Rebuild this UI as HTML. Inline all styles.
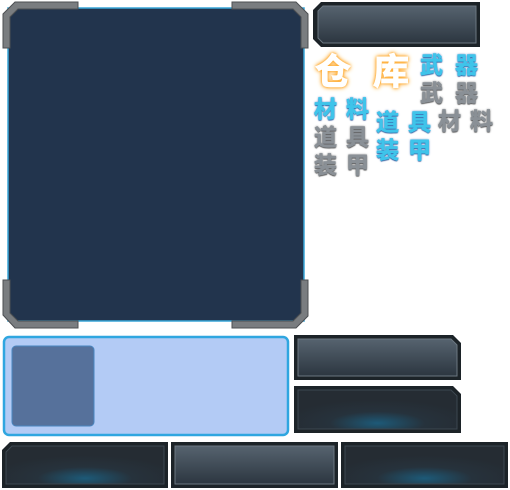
<!DOCTYPE html>
<html><head><meta charset="utf-8"><style>
body{margin:0;width:510px;height:490px;background:#fff;position:relative;overflow:hidden;font-family:"Liberation Sans","Noto Sans CJK SC",sans-serif}
.t{position:absolute;font-weight:bold;line-height:1;white-space:nowrap}
.c{color:#3fc4ea;-webkit-text-stroke:0.6px #3fc4ea;text-shadow:0 0 2px #2a5fb0,0 1px 1px #244a8a}
.g{color:#8a9096;-webkit-text-stroke:0.6px #8a9096;text-shadow:0 0 2px #555,0 1px 1px #444}
.o{color:#fff;-webkit-text-stroke:1px #fff;text-shadow:0 0 3px #ffb33a,0 0 5px #ffa020,0 0 2px #ff9a10,0 0 6px #ffc060}
</style></head><body>
<svg width="510" height="490" style="position:absolute;left:0;top:0">
<defs>
<linearGradient id="bt" x1="0" y1="0" x2="0" y2="1"><stop offset="0" stop-color="#56636f"/><stop offset="1" stop-color="#2c3640"/></linearGradient>
<radialGradient id="bd" cx="0.5" cy="0.85" r="0.6"><stop offset="0" stop-color="#1d5a78"/><stop offset="0.5" stop-color="#26323c"/><stop offset="1" stop-color="#252c33"/></radialGradient>
</defs>
<rect x="8" y="8" width="296" height="313" fill="#22344d" stroke="#39a6d8" stroke-width="1.5"/>
<g fill="#7a7d80" stroke="#4c4f52" stroke-width="1">
<path d="M3 48 V14 L15 2 H78 V9 H18 L10 17 V48Z"/>
<path d="M232 2 H296 L308 14 V48 H301 V17 L293 9 H232Z"/>
<path d="M3 280 V315 L15 328 H78 V321 H18 L10 313 V280Z"/>
<path d="M232 328 H296 L308 316 V280 H301 V313 L293 321 H232Z"/>
</g>
<path d="M313 10 L321 2 H480 V47 H321 L313 39Z" fill="#1c2328"/>
<path d="M318 11 L323 6 H476 V43 H323 L318 38Z" fill="url(#bt)" stroke="#6b7781" stroke-width="1"/>
<rect x="4" y="337" width="284" height="98" rx="5" fill="#b3cbf5" stroke="#2fa6e0" stroke-width="2.5"/>
<rect x="12" y="346" width="82" height="80" rx="4" fill="#56719b" stroke="#4a86c0" stroke-width="1"/>
<path d="M294 335 H453 L461 343 V380 H294Z" fill="#1c2328"/>
<path d="M298 339 H451 L457 345 V376 H298Z" fill="url(#bt)" stroke="#6b7781"/>
<path d="M294 386 H453 L461 394 V433 H294Z" fill="#1c2328"/>
<path d="M298 390 H451 L457 396 V429 H298Z" fill="url(#bd)" stroke="#3c4750"/>
<path d="M2 450 L10 442 H168 V488 H2Z" fill="#1c2328"/>
<path d="M6 452 L12 446 H164 V484 H6Z" fill="url(#bd)" stroke="#3c4750"/>
<rect x="171" y="442" width="167" height="46" fill="#1c2328"/>
<rect x="175" y="446" width="159" height="38" fill="url(#bt)" stroke="#6b7781"/>
<rect x="341" y="442" width="167" height="46" fill="#1c2328"/>
<rect x="345" y="446" width="159" height="38" fill="url(#bd)" stroke="#3c4750"/>
</svg>
<div class="t o" style="left:315px;top:54px;font-size:36px;letter-spacing:22px">仓库</div>
<div class="t c" style="left:420px;top:54px;font-size:23px;letter-spacing:12px">武器</div>
<div class="t g" style="left:420px;top:82px;font-size:23px;letter-spacing:12px">武器</div>
<div class="t c" style="left:314px;top:98px;font-size:23px;letter-spacing:9px">材料</div>
<div class="t g" style="left:314px;top:126px;font-size:23px;letter-spacing:9px">道具</div>
<div class="t g" style="left:314px;top:154px;font-size:23px;letter-spacing:9px">装甲</div>
<div class="t c" style="left:376px;top:111px;font-size:23px;letter-spacing:9px">道具</div>
<div class="t c" style="left:376px;top:139px;font-size:23px;letter-spacing:9px">装甲</div>
<div class="t g" style="left:438px;top:110px;font-size:23px;letter-spacing:9px">材料</div>
</body></html>
